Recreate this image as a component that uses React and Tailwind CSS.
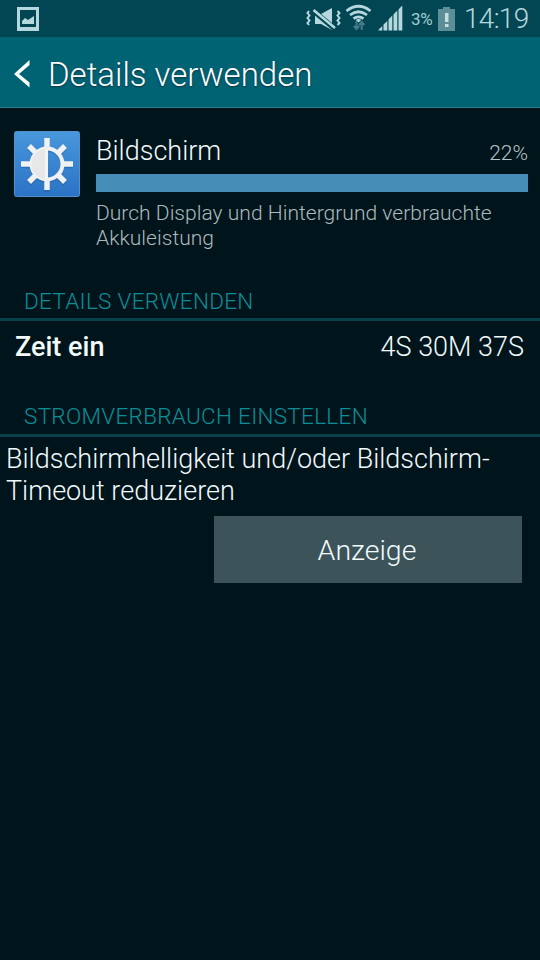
import React from "react";

function StatusBar() {
  return (
    <div className="flex h-[37px] shrink-0 items-center bg-[#014652]">
      <svg className="ml-[17px] h-[24px] w-[22px]" viewBox="0 0 22 24" fill="#b5d8df">
        <path fillRule="evenodd" d="M0 0H22V24H0ZM3 3V20H19V3Z" />
        <path d="M5 17V14L8 11L11 13L17 9V17Z" />
      </svg>
      <div className="flex-1" />
      <svg className="h-[37px] w-[106px]" viewBox="302 0 106 37" fill="#b5d8df">
        <path d="M309 11L307.500 13L309.500 15.500L307.500 18L309.500 20.500L307.500 23L309 25M337.500 11L339.500 13L337.500 15.500L339.500 18L337.500 20.500L339.500 23L337.500 25" fill="none" stroke="#b5d8df" strokeWidth="2" />
        <path d="M315 14H321L332 8V30L321 24H315Z" />
        <path d="M313 10.500L335 29" stroke="#014652" strokeWidth="5.200" />
        <path d="M313.500 10L335 28" stroke="#b5d8df" strokeWidth="2.600" />
        <g fill="none" stroke="#b5d8df" strokeWidth="2.700">
          <path d="M346.500 11Q358.500 1.500 370.500 11" />
          <path d="M350 15Q358.500 8.500 367 15" />
          <path d="M353.500 18.700Q358.500 15 363.500 18.700" />
        </g>
        <path d="M355.800 20Q358.500 18 361.200 20L358.500 22.500Z" />
        <path d="M356.500 21V28.500M353.800 26L356.500 29L359.200 26M361.700 30V22.500M359 25L361.700 22L364.400 25" fill="none" stroke="#447d86" strokeWidth="2" />
        <path d="M378.500 30.500V29.800L382.300 26V30.500ZM383.500 30.500V24.500L387.300 21V30.500ZM388.500 30.500V19.500L392.300 15.500V30.500ZM393.500 30.500V14.500L397.300 10.500V30.500ZM398.500 30.500V9.500L402.300 5.500V30.500Z" />
      </svg>
      <span className="ml-[3px] w-[27px] whitespace-nowrap pt-[2px] text-[17px] leading-[37px] tracking-[-0.3px] text-[#a4cbd2]">3%</span>
      <svg className="h-[24px] w-[17px]" viewBox="0 0 17 24">
        <path d="M5 0H12V2H17V24H0V2H5Z" fill="#5d8d96" />
        <path d="M7 6H10.500V15H7ZM7 17H10.500V20H7Z" fill="#c5e0e5" />
      </svg>
      <span className="ml-[9px] w-[76px] whitespace-nowrap text-[28px] font-light leading-[37px] tracking-[-0.7px] text-[#b5d8df]">14:19</span>
    </div>
  );
}

function BrightnessIcon() {
  return (
    <svg className="h-[66px] w-[66px] shrink-0" viewBox="0 0 66 66">
      <defs>
        <linearGradient id="tile" x2="0" y2="1">
          <stop stopColor="#4997dc" />
          <stop offset="1" stopColor="#2b72c4" />
        </linearGradient>
      </defs>
      <rect x=".5" y=".5" width="65" height="65" rx="2" fill="url(#tile)" stroke="#5291ca" />
      <g opacity=".35" transform="translate(0 1.500)" fill="none" stroke="#174b88" strokeWidth="5.500">
        <circle cx="33" cy="33" r="15.500" strokeWidth="4" />
        <path d="M33 7V18M33 48V59M7 33H18M48 33H59M15 15L23 23M43 43L51 51M15 51L23 43M43 23L51 15" />
      </g>
      <g fill="none" stroke="#f0f1f2" strokeWidth="5.500">
        <circle cx="33" cy="33" r="15.500" strokeWidth="4" />
        <path d="M33 7V17M33 49V59M7 33H17M49 33H59M15 15L22 22M44 44L51 51M15 51L22 44M44 22L51 15" />
      </g>
      <path d="M34 17.500H33A15.500 15.500 0 0 0 33 48.500H34Z" fill="#e5e7e9" />
      <path d="M31 18H34V48H31Z" fill="#f4f4f4" />
    </svg>
  );
}

function SectionHeader({ children, className }) {
  return (
    <div className={`flex shrink-0 items-end border-b-[3px] border-[#084248] pl-[24px] ${className}`}>
      <h2 className="whitespace-nowrap text-[22.5px] font-light leading-[26px] tracking-[0.3px] text-[#0b8e98]">{children}</h2>
    </div>
  );
}

export default function App() {
  return (
    <div className="flex h-[960px] w-[540px] flex-col overflow-hidden bg-[#00141b] font-['Roboto',sans-serif] text-[#f2fafb]">
      <StatusBar />
      <header className="flex h-[71px] shrink-0 items-center border-b border-[#2a7a87] bg-[#006374] pt-[3px]">
        <svg className="ml-[14px] h-[28px] w-[16px]" viewBox="0 0 16 28" fill="#fff">
          <path d="M15.500 0V5L5 14L15.500 22.500V27.500L0 14Z" />
        </svg>
        <h1 className="ml-[18px] whitespace-nowrap pt-[3px] text-[33px] font-light leading-[40px] text-white [text-shadow:0_1px_2px_#00333c]">Details verwenden</h1>
      </header>
      <section className="flex h-[170px] shrink-0 pl-[14px] pr-[12px] pt-[23px]">
        <BrightnessIcon />
        <div className="ml-[16px] flex-1">
          <div className="flex h-[43px] items-baseline justify-between pt-[4px]">
            <span className="text-[27px] font-light leading-[32px]">Bildschirm</span>
            <span className="text-[21px] font-light leading-[28px] text-[#b7c4c7]">22%</span>
          </div>
          <div className="h-[18px] bg-[#468db8]" />
          <p className="mt-[9px] whitespace-nowrap text-[21px] font-light leading-[25px] tracking-[0.03px] text-[#adbabd]">Durch Display und Hintergrund verbrauchte<br />Akkuleistung</p>
        </div>
      </section>
      <SectionHeader className="h-[43px] pb-[4px]">DETAILS VERWENDEN</SectionHeader>
      <div className="flex h-[66px] shrink-0 justify-between pl-[15px] pr-[16px] pt-[10px] text-[27px] leading-[32px]">
        <span className="font-medium">Zeit ein</span>
        <span className="font-light">4S 30M 37S</span>
      </div>
      <SectionHeader className="h-[50px] pb-[5px]">STROMVERBRAUCH EINSTELLEN</SectionHeader>
      <p className="mt-[6px] h-[73px] shrink-0 whitespace-nowrap pl-[6px] text-[27px] font-light leading-[32px]">Bildschirmhelligkeit und/oder Bildschirm-<br />Timeout reduzieren</p>
      <button className="ml-[214px] h-[67px] w-[308px] shrink-0 bg-[#3b5359] pr-[2px] pt-[4px] text-[28.5px] font-light">Anzeige</button>
    </div>
  );
}
